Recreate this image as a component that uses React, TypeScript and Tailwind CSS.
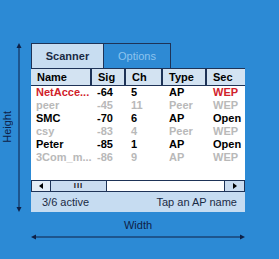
const rows = [
  { name: 'NetAcce...', sig: '-64', ch: '5', type: 'AP', sec: 'WEP', tone: 'red' },
  { name: 'peer', sig: '-45', ch: '11', type: 'Peer', sec: 'WEP', tone: 'dim' },
  { name: 'SMC', sig: '-70', ch: '6', type: 'AP', sec: 'Open', tone: 'on' },
  { name: 'csy', sig: '-83', ch: '4', type: 'Peer', sec: 'WEP', tone: 'dim' },
  { name: 'Peter', sig: '-85', ch: '1', type: 'AP', sec: 'Open', tone: 'on' },
  { name: '3Com_m...', sig: '-86', ch: '9', type: 'AP', sec: 'WEP', tone: 'dim' },
];

const cols = 'grid grid-cols-[61px_34px_37px_44px_38px]';

export default function App() {
  return (
    <div
      className="w-[279px] h-[259px] bg-[#2c8ad5] pt-[43px] overflow-hidden"
      style={{ fontFamily: '"Liberation Sans", Arial, sans-serif' }}
    >
      <div className="flex">
        {/* height annotation */}
        <div className="w-[31px] h-[169px] flex items-center">
          <div className="w-[15px] flex justify-center">
            <span className="[writing-mode:vertical-rl] rotate-180 text-[11px] leading-[13px] text-[#0e2147] pt-[2px]">
              Height
            </span>
          </div>
          <svg width="8" height="169" viewBox="0 0 8 169">
            <line x1="4" y1="2" x2="4" y2="167" stroke="#0e2147" strokeWidth="1" />
            <path d="M4 0 L1.5 5 L6.5 5 Z" fill="#0e2147" />
            <path d="M4 169 L1.5 164 L6.5 164 Z" fill="#0e2147" />
          </svg>
        </div>

        {/* panel */}
        <div className="w-[214px] flex flex-col">
          <div className="flex h-[25px]">
            <div className="w-[72px] bg-[#c8ddf1] border-t border-l border-[#1e3357] flex items-center justify-center text-[11px] font-bold text-[#1a2a44]">
              Scanner
            </div>
            <div className="w-[68px] bg-[#2e8ad4] border-t border-r border-l border-[#1e3357] flex items-center justify-center text-[11px] text-[#8cc3ee]">
              Options
            </div>
          </div>

          <div className="bg-white h-[112px] flex flex-col">
            <div className={`${cols} h-[18px] bg-[#d3e3f2] border-t border-b border-[#1e3357] text-[11px] font-bold`}>
              {['Name', 'Sig', 'Ch', 'Type', 'Sec'].map((h, i) => (
                <div
                  key={h}
                  className={`flex items-center pl-[6px] ${i < 4 ? 'border-r-2 border-[#1e3357]' : ''}`}
                >
                  {h}
                </div>
              ))}
            </div>
            {rows.map((r) => {
              const main =
                r.tone === 'red' ? 'text-[#d0222b]' : r.tone === 'dim' ? 'text-[#b9b9b9]' : 'text-black';
              const mid = r.tone === 'dim' ? 'text-[#b9b9b9]' : 'text-black';
              return (
                <div key={r.name} className={`${cols} h-[13px] text-[11px] leading-[13px] font-bold`}>
                  <div className={`pl-[5px] ${main}`}>{r.name}</div>
                  <div className={`pl-[5px] ${mid}`}>{r.sig}</div>
                  <div className={`pl-[5px] ${mid}`}>{r.ch}</div>
                  <div className={`pl-[6px] ${mid}`}>{r.type}</div>
                  <div className={`pl-[6px] ${main}`}>{r.sec}</div>
                </div>
              );
            })}
          </div>

          {/* scrollbar */}
          <div className="flex h-[12px] border-y border-[#1e3357] bg-white">
            <div className="w-[20px] bg-[#e6eef7] border-x border-[#1e3357] flex items-center justify-center">
              <svg width="4" height="6" viewBox="0 0 4 6"><path d="M0 3 L4 0 L4 6 Z" fill="#000" /></svg>
            </div>
            <div className="w-[56px] bg-[#cadcf0] border-r border-[#1e3357] flex items-center justify-center">
              <span className="text-[8px] font-bold leading-none tracking-[1px] text-[#222]">III</span>
            </div>
            <div className="flex-1" />
            <div className="w-[21px] bg-[#cadcf0] border-x border-[#1e3357] flex items-center justify-center">
              <svg width="4" height="6" viewBox="0 0 4 6"><path d="M4 3 L0 0 L0 6 Z" fill="#000" /></svg>
            </div>
          </div>

          {/* status */}
          <div className="h-[20px] bg-[#c6dcf1] flex items-center justify-between pl-[11px] pr-[8px] text-[11px] text-[#1a2a44]">
            <span>3/6 active</span>
            <span>Tap an AP name</span>
          </div>
        </div>
      </div>

      {/* width annotation */}
      <div className="ml-[31px] w-[214px] flex flex-col items-center pt-[7px]">
        <span className="text-[11px] leading-[13px] text-[#0e2147]">Width</span>
        <svg width="214" height="8" viewBox="0 0 214 8" className="mt-[1px]">
          <line x1="2" y1="4" x2="212" y2="4" stroke="#0e2147" strokeWidth="1" />
          <path d="M0 4 L5 1.5 L5 6.5 Z" fill="#0e2147" />
          <path d="M214 4 L209 1.5 L209 6.5 Z" fill="#0e2147" />
        </svg>
      </div>
    </div>
  );
}
